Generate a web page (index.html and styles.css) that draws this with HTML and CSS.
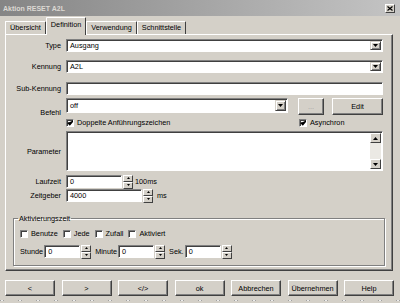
FILE: index.html
```html
<!DOCTYPE html>
<html lang="de">
<head>
  <meta charset="UTF-8" />
  <title>Aktion RESET A2L</title>
  <link rel="stylesheet" href="styles.css">
</head>
<body>
  <div class="titlebar">
    <span>Aktion RESET A2L</span>
    <span class="close">
      <svg width="6" height="5" viewBox="0 0 6 5"><path d="M0.5 0.5 L5.5 4.5 M5.5 0.5 L0.5 4.5" stroke="#000" stroke-width="1.2"/></svg>
    </span>
  </div>

  <div class="tabs">
    <div class="tab">Übersicht</div>
    <div class="tab active">Definition</div>
    <div class="tab">Verwendung</div>
    <div class="tab">Schnittstelle</div>
  </div>

  <div class="panel">
    <div class="row">
      <label>Type</label>
      <div class="select"><span>Ausgang</span><i class="drop"><svg width="5" height="3"><path d="M0 0h5L2.5 3z"/></svg></i></div>
    </div>

    <div class="row r-kennung">
      <label>Kennung</label>
      <div class="select"><span>A2L</span><i class="drop"><svg width="5" height="3"><path d="M0 0h5L2.5 3z"/></svg></i></div>
    </div>

    <div class="row r-sub">
      <label>Sub-Kennung</label>
      <div class="input grow"></div>
    </div>

    <div class="row befehl">
      <label>Befehl</label>
      <div class="stack">
        <div class="line">
          <div class="select short"><span>off</span><i class="drop"><svg width="5" height="3"><path d="M0 0h5L2.5 3z"/></svg></i></div>
          <button class="btn dots" disabled>...</button>
          <button class="btn edit">Edit</button>
        </div>
        <div class="line checks">
          <div class="chk first"><i class="box"><svg width="7" height="6"><path d="M0.8 2.8 L2.8 4.8 L6.2 0.8" stroke="#000" stroke-width="1.4" fill="none"/></svg></i>Doppelte Anführungszeichen</div>
          <div class="chk"><i class="box"><svg width="7" height="6"><path d="M0.8 2.8 L2.8 4.8 L6.2 0.8" stroke="#000" stroke-width="1.4" fill="none"/></svg></i>Asynchron</div>
        </div>
      </div>
    </div>

    <div class="row param">
      <label>Parameter</label>
      <div class="textarea">
        <div class="scrollbar">
          <i class="sbtn"><svg width="5" height="3"><path d="M0 3h5L2.5 0z"/></svg></i>
          <i class="track"></i>
          <i class="sbtn"><svg width="5" height="3"><path d="M0 0h5L2.5 3z"/></svg></i>
        </div>
      </div>
    </div>

    <div class="row r-lauf">
      <label>Laufzeit</label>
      <div class="input w56">0</div>
      <div class="spin"><i><svg width="3" height="2"><path d="M0 2h3L1.5 0z"/></svg></i><i><svg width="3" height="2"><path d="M0 0h3L1.5 2z"/></svg></i></div>
      <span class="unit">100ms</span>
    </div>

    <div class="row r-zeit">
      <label>Zeitgeber</label>
      <div class="input w76">4000</div>
      <div class="spin"><i><svg width="3" height="2"><path d="M0 2h3L1.5 0z"/></svg></i><i><svg width="3" height="2"><path d="M0 0h3L1.5 2z"/></svg></i></div>
      <span class="unit ms">ms</span>
    </div>

    <fieldset class="group">
      <legend>Aktivierungszeit</legend>
      <div class="grow-row">
        <div class="chk"><i class="box"></i>Benutze</div>
        <div class="chk"><i class="box"></i>Jede</div>
        <div class="chk"><i class="box"></i>Zufall</div>
        <div class="chk"><i class="box"></i>Aktiviert</div>
      </div>
      <div class="time-row">
        <span>Stunde</span>
        <div class="input w36">0</div>
        <div class="spin"><i><svg width="3" height="2"><path d="M0 2h3L1.5 0z"/></svg></i><i><svg width="3" height="2"><path d="M0 0h3L1.5 2z"/></svg></i></div>
        <span>Minute</span>
        <div class="input w36">0</div>
        <div class="spin"><i><svg width="3" height="2"><path d="M0 2h3L1.5 0z"/></svg></i><i><svg width="3" height="2"><path d="M0 0h3L1.5 2z"/></svg></i></div>
        <span>Sek.</span>
        <div class="input w36">0</div>
        <div class="spin"><i><svg width="3" height="2"><path d="M0 2h3L1.5 0z"/></svg></i><i><svg width="3" height="2"><path d="M0 0h3L1.5 2z"/></svg></i></div>
      </div>
    </fieldset>
  </div>

  <div class="buttons">
    <button class="btn">&lt;</button>
    <button class="btn">&gt;</button>
    <button class="btn">&lt;/&gt;</button>
    <button class="btn">ok</button>
    <button class="btn">Abbrechen</button>
    <button class="btn">Übernehmen</button>
    <button class="btn">Help</button>
  </div>
  <div class="status"></div>
</body>
</html>
```

FILE: styles.css
```css
:root {
  --face: #d4d0c8;
  --light: #ffffff;
  --shadow: #808080;
  --dark: #404040;
}

body {
  margin: 0;
  width: 400px;
  height: 303px;
  overflow: hidden;
  background-color: var(--face);
  font-family: "Liberation Sans", Arial, sans-serif;
  font-size: 7.3px;
  color: #000;
}

svg path { fill: #000; }

/* title */
.titlebar {
  height: 16px;
  display: flex;
  align-items: center;
  justify-content: space-between;
  padding: 0 5px 0 3px;
  background: linear-gradient(to right, #858585, #c4c4c4);
  color: #dcd9d3;
  font-weight: bold;
  font-size: 7px;
}

.close {
  width: 10px;
  height: 9px;
  box-sizing: border-box;
  display: flex;
  align-items: center;
  justify-content: center;
  background-color: var(--face);
  border: 1px solid;
  border-color: var(--light) var(--dark) var(--dark) var(--light);
}

/* tabs */
.tabs {
  display: flex;
  align-items: flex-end;
  height: 17px;
  margin-top: 1px;
  padding-left: 5px;
  position: relative;
  z-index: 1;
}

.tab {
  height: 13px;
  box-sizing: border-box;
  padding: 0 4px;
  line-height: 12px;
  border: 1px solid;
  border-bottom: none;
  border-color: var(--light) var(--dark) transparent var(--light);
  border-radius: 1px 1px 0 0;
}

.tab.active {
  height: 18px;
  margin-bottom: -1px;
  line-height: 14px;
  background-color: var(--face);
}

/* panel */
.panel {
  height: 237px;
  margin: 0 7px 0 5px;
  box-sizing: border-box;
  padding: 4px 9px 0 0;
  border: 1px solid;
  border-color: var(--light) var(--dark) var(--dark) var(--light);
  box-shadow: inset -1px -1px var(--shadow);
}

.row {
  display: flex;
  align-items: center;
  gap: 5px;
  height: 13px;
}

.row > label {
  width: 55px;
  flex: none;
  text-align: right;
}

.r-kennung { margin-top: 8px; }
.r-sub { margin-top: 9px; }
.befehl { height: auto; margin-top: 3px; }
.param { height: 40px; margin-top: 4px; }
.r-lauf { margin-top: 4px; gap: 0; }
.r-zeit { margin-top: 1px; gap: 0; }
.r-lauf > label, .r-zeit > label { margin-right: 5px; }

.stack {
  flex: 1;
  display: flex;
  flex-direction: column;
  gap: 3px;
}

.line {
  display: flex;
  align-items: flex-start;
}

.checks { height: 9px; align-items: center; }

/* fields */
.select, .input, .textarea {
  box-sizing: border-box;
  background-color: #fff;
  border: 1px solid;
  border-color: var(--shadow) var(--light) var(--light) var(--shadow);
  box-shadow: inset 1px 1px var(--dark);
}

.select {
  flex: 1;
  height: 13px;
  display: flex;
  align-items: center;
  justify-content: space-between;
  padding: 0 1px 0 3px;
}

.select.short {
  flex: none;
  width: 222px;
  height: 15px;
}

.drop {
  width: 11px;
  height: calc(100% - 2px);
  box-sizing: border-box;
  display: flex;
  align-items: center;
  justify-content: center;
  background-color: var(--face);
  border: 1px solid;
  border-color: var(--face) var(--dark) var(--dark) var(--face);
  box-shadow: inset 1px 1px var(--light), inset -1px -1px var(--shadow);
}

.input {
  height: 13px;
  padding-left: 3px;
  line-height: 11px;
}

.grow { flex: 1; }
.w56 { width: 56px; }
.w76 { width: 76px; }
.w36 { width: 36px; }

.textarea {
  flex: 1;
  height: 40px;
  display: flex;
  justify-content: flex-end;
  padding: 1px;
}

.scrollbar {
  width: 11px;
  display: flex;
  flex-direction: column;
}

.track {
  flex: 1;
  background-color: #ebe9e4;
}

.sbtn, .spin i {
  display: flex;
  align-items: center;
  justify-content: center;
  box-sizing: border-box;
  background-color: var(--face);
  border: 1px solid;
  border-color: var(--light) var(--dark) var(--dark) var(--light);
}

.sbtn { height: 10px; }

.spin {
  width: 10px;
  height: 14px;
  margin-left: 1px;
  display: flex;
  flex-direction: column;
}

.spin i { flex: 1; }

.unit { margin-left: 2px; }
.unit.ms { margin-left: 4px; }

/* buttons */
.btn {
  box-sizing: border-box;
  height: 17px;
  padding: 0;
  background-color: var(--face);
  font: inherit;
  color: #000;
  border: 1px solid;
  border-color: var(--light) var(--dark) var(--dark) var(--light);
  box-shadow: inset -1px -1px var(--shadow);
}

.btn.dots {
  width: 26px;
  margin-left: 10px;
  color: #a0a0a0;
}

.btn.edit {
  width: 51px;
  margin-left: 8px;
}

/* checkboxes */
.chk {
  display: flex;
  align-items: center;
  gap: 3px;
}

.chk.first { width: 233px; }

.box {
  width: 8px;
  height: 8px;
  box-sizing: border-box;
  display: flex;
  align-items: center;
  justify-content: center;
  background-color: #fff;
  border: 1px solid;
  border-color: var(--shadow) var(--light) var(--light) var(--shadow);
  box-shadow: inset 1px 1px var(--dark);
}

/* group */
.group {
  margin: 12px -2px 0 7px;
  padding: 0 0 7px 6px;
  border: 1px solid var(--shadow);
  box-shadow: inset 1px 1px var(--light), 1px 1px var(--light);
}

.group legend {
  margin-left: -2px;
  padding: 0 1px;
  line-height: 9px;
}

.grow-row {
  display: flex;
  gap: 5px;
  margin-top: 6px;
  height: 9px;
  align-items: center;
}

.time-row {
  display: flex;
  align-items: center;
  height: 13px;
  margin-top: 7px;
}

.time-row span { margin-right: 1px; }
.time-row .spin { margin-right: 4px; }

/* bottom */
.buttons {
  display: flex;
  justify-content: space-between;
  margin-top: 9px;
  padding: 0 6px 0 5px;
}

.buttons .btn {
  width: 50px;
  height: 16px;
}

.status {
  height: 1px;
  margin-top: 4px;
  background: repeating-linear-gradient(to right, #a0a0a0 0 1px, #eeeeee 1px 3px, #a0a0a0 3px 4px, #d4d0c8 4px 18px);
}
```
